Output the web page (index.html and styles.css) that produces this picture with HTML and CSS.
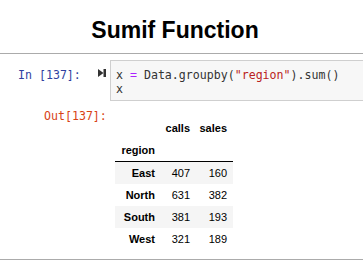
FILE: index.html
```html
<!DOCTYPE html>
<html>
<head>
<meta charset="utf-8">
<link rel="stylesheet" href="styles.css">
</head>
<body>
<div class="page">
  <h1 class="title">Sumif Function</h1>
  <div class="cell">
    <div class="input-row">
      <div class="prompt in-prompt">In [137]:</div>
      <svg class="run-icon" width="8" height="8" viewBox="0 0 8 8"><path d="M0 0 L5.5 4 L0 8 Z" fill="#333"/><rect x="5.5" y="0" width="2.5" height="8" fill="#333"/></svg>
      <div class="code-box"><div class="code-line">x <span class="op">=</span> Data.groupby(<span class="str">"region"</span>).sum()</div><div class="code-line">x</div></div>
    </div>
    <div class="output-row">
      <div class="prompt out-prompt">Out[137]:</div>
      <table class="df">
        <colgroup><col class="c1"><col class="c2"><col class="c3"></colgroup>
        <thead>
          <tr><th></th><th>calls</th><th>sales</th></tr>
          <tr class="names"><th>region</th><th></th><th></th></tr>
        </thead>
        <tbody>
          <tr><th>East</th><td>407</td><td>160</td></tr>
          <tr><th>North</th><td>631</td><td>382</td></tr>
          <tr><th>South</th><td>381</td><td>193</td></tr>
          <tr><th>West</th><td>321</td><td>189</td></tr>
        </tbody>
      </table>
    </div>
  </div>
</div>
</body>
</html>
```
FILE: styles.css
```css
html, body {
  margin: 0;
  padding: 0;
  background: #fff;
  overflow: hidden;
}
.page {
  width: 363px;
  height: 261px;
  font-family: "Liberation Sans", Arial, sans-serif;
  color: #000;
}
.title {
  margin: 0;
  padding: 17px 13px 0 0;
  font-size: 23px;
  line-height: 27px;
  font-weight: bold;
  text-align: center;
  height: 36px;
  border-bottom: 1px solid #ababab;
}
.cell {
  padding-top: 6px;
  border-bottom: 1px solid #ababab;
  height: 199px;
}
.input-row {
  display: flex;
  align-items: flex-start;
}
.prompt {
  font-family: "DejaVu Sans Mono", "Liberation Mono", monospace;
  font-size: 11.6px;
  line-height: 14px;
  white-space: pre;
  box-sizing: border-box;
}
.in-prompt {
  width: 98px;
  padding-left: 18px;
  padding-top: 8px;
  color: #303f9f;
}
.run-icon {
  margin-top: 9px;
  margin-right: 4px;
  flex: none;
}
.code-box {
  flex: 1;
  margin-right: -4px;
  background: #f7f7f7;
  border: 1px solid #cfcfcf;
  padding: 7px 5px 4px 5px;
  font-family: "DejaVu Sans Mono", "Liberation Mono", monospace;
  font-size: 11.6px;
  line-height: 14px;
  color: #333;
  white-space: pre;
}
.op { color: #aa22ff; }
.str { color: #ba2121; }
.output-row {
  display: flex;
  align-items: flex-start;
  margin-top: 8px;
}
.out-prompt {
  width: 115px;
  padding-left: 44px;
  color: #d84315;
}
.df {
  margin-top: 8px;
  border-collapse: collapse;
  table-layout: fixed;
  width: 118px;
  font-size: 11px;
  line-height: 14px;
}
.df .c1 { width: 46px; }
.df .c2 { width: 35px; }
.df .c3 { width: 37px; }
.df th, .df td {
  padding: 4px 6px 4px 0;
  text-align: right;
  white-space: nowrap;
}
.df th { font-weight: bold; }
.df td { font-weight: normal; }
.df thead { border-bottom: 1px solid #000; }
.df tbody tr:nth-child(odd) { background: #f5f5f5; }
```
